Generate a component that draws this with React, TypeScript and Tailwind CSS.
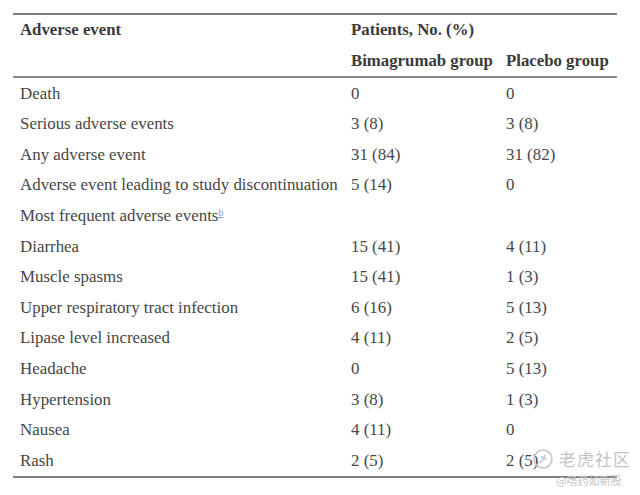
const rows: [string, string, string, boolean?][] = [
  ["Death", "0", "0"],
  ["Serious adverse events", "3 (8)", "3 (8)"],
  ["Any adverse event", "31 (84)", "31 (82)"],
  ["Adverse event leading to study discontinuation", "5 (14)", "0"],
  ["Most frequent adverse events", "", "", true],
  ["Diarrhea", "15 (41)", "4 (11)"],
  ["Muscle spasms", "15 (41)", "1 (3)"],
  ["Upper respiratory tract infection", "6 (16)", "5 (13)"],
  ["Lipase level increased", "4 (11)", "2 (5)"],
  ["Headache", "0", "5 (13)"],
  ["Hypertension", "3 (8)", "1 (3)"],
  ["Nausea", "4 (11)", "0"],
  ["Rash", "2 (5)", "2 (5)"],
];

export default function App() {
  return (
    <div
      className="relative h-[495px] w-[640px] overflow-hidden bg-white pt-[13px]"
      style={{ fontFamily: '"Liberation Serif", "DejaVu Serif", serif' }}
    >
      <div className="ml-[13px] w-[604px] border-y-2 border-[#7d7d7d]">
        <div className="grid grid-cols-[331px_155px_1fr] text-[16.8px] font-bold text-[#3a3a3a]">
          <div className="pl-[7px] leading-[30px]">Adverse event</div>
          <div className="col-span-2 pl-[7px] leading-[30px]">Patients, No. (%)</div>
          <div />
          <div className="pl-[7px] leading-[31px]">Bimagrumab group</div>
          <div className="pl-[7px] leading-[31px]">Placebo group</div>
        </div>
        <div className="border-t-2 border-[#8a8a8a]">
          {rows.map(([label, a, b, sup]) => (
            <div
              key={label}
              className="grid h-[30.6px] grid-cols-[331px_155px_1fr] items-center text-[16.9px] text-[#474747]"
            >
              <div className="pl-[7px]">
                {label}
                {sup && (
                  <sup className="text-[10px] text-[#7a9cc7] underline">b</sup>
                )}
              </div>
              <div className="pl-[7px]">{a}</div>
              <div className="pl-[7px]">{b}</div>
            </div>
          ))}
        </div>
      </div>

      <div className="absolute left-[532px] top-[446px] flex items-center gap-[5px] text-[#c4c4c4]">
        <svg width="22" height="22" viewBox="0 0 22 22" fill="none" stroke="#c4c4c4" strokeWidth="1.5">
          <circle cx="11" cy="11" r="9" />
          <path d="M7 15c2-1 5-4 6-8M9 9c2 0 4 1 5 3" />
        </svg>
        <span
          className="text-[17px] tracking-[1px]"
          style={{ fontFamily: '"Noto Sans CJK SC", sans-serif' }}
        >
          老虎社区
        </span>
      </div>
      <div
        className="absolute left-[556px] top-[472px] text-[11px] text-[#c4c4c4]"
        style={{ fontFamily: '"Noto Sans CJK SC", sans-serif' }}
      >
        @嗜药如新股
      </div>
    </div>
  );
}
